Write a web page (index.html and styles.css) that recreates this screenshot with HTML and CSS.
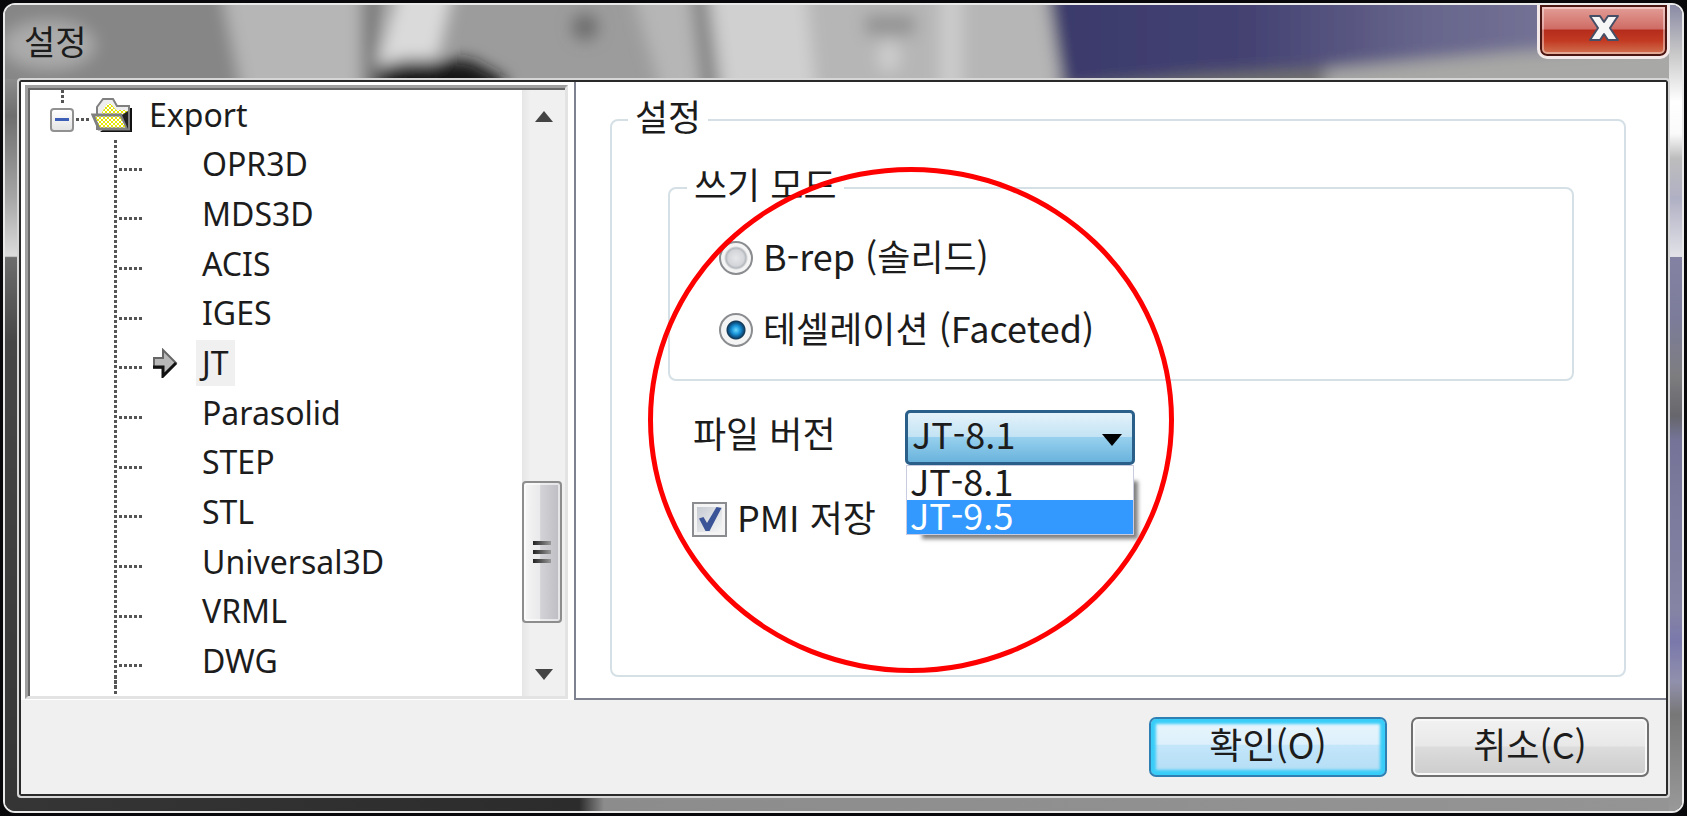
FILE: index.html
```
<!DOCTYPE html>
<html lang="ko">
<head>
    <meta charset="UTF-8">
    <title>설정</title>
    <link rel="stylesheet" href="styles.css">
</head>
<body>
    <div class="window">
        <!-- 반투명 창틀 배경 -->
        <svg class="glass" viewBox="0 0 1677 806" preserveAspectRatio="none" aria-hidden="true">
            <defs>
                <filter id="soft" x="-20%" y="-20%" width="140%" height="140%"><feGaussianBlur stdDeviation="8"/></filter>
                <linearGradient id="sky" x1="0" x2="1">
                    <stop offset="0" stop-color="#3a396b"/>
                    <stop offset="0.3" stop-color="#444272"/>
                    <stop offset="0.55" stop-color="#66648b"/>
                    <stop offset="1" stop-color="#8786a3"/>
                </linearGradient>
                <linearGradient id="left" x1="0" y1="0" x2="0" y2="1">
                    <stop offset="0" stop-color="#8c8c8c"/>
                    <stop offset="0.05" stop-color="#6e6e6e"/>
                    <stop offset="0.16" stop-color="#a5a5a5"/>
                    <stop offset="0.242" stop-color="#dcdcdc"/>
                    <stop offset="0.244" stop-color="#6c6c6c"/>
                    <stop offset="0.36" stop-color="#464646"/>
                    <stop offset="1" stop-color="#353535"/>
                </linearGradient>
                <linearGradient id="right" x1="0" y1="0" x2="0" y2="1">
                    <stop offset="0" stop-color="#8a8aa5"/>
                    <stop offset="0.06" stop-color="#c8c8c8"/>
                    <stop offset="0.12" stop-color="#ffffff"/>
                    <stop offset="0.16" stop-color="#fafafa"/>
                    <stop offset="0.19" stop-color="#bdbdbd"/>
                    <stop offset="0.24" stop-color="#b0b0c4"/>
                    <stop offset="0.312" stop-color="#e2e2e8"/>
                    <stop offset="0.313" stop-color="#8382a3"/>
                    <stop offset="0.39" stop-color="#7c7c9a"/>
                    <stop offset="0.46" stop-color="#7d7d80"/>
                    <stop offset="0.51" stop-color="#66666c"/>
                    <stop offset="0.54" stop-color="#757498"/>
                    <stop offset="0.75" stop-color="#8684a4"/>
                    <stop offset="0.79" stop-color="#7a78ab"/>
                    <stop offset="0.84" stop-color="#9190ac"/>
                    <stop offset="0.88" stop-color="#777777"/>
                    <stop offset="1" stop-color="#999999"/>
                </linearGradient>
                <linearGradient id="bottom" x1="0" x2="1">
                    <stop offset="0" stop-color="#353535"/>
                    <stop offset="0.345" stop-color="#2c2c2c"/>
                    <stop offset="0.36" stop-color="#8c8c8c"/>
                    <stop offset="1" stop-color="#949494"/>
                </linearGradient>
            </defs>
            <rect width="1677" height="806" fill="#9c9c9c"/>
            <g filter="url(#soft)">
                <rect x="-30" y="-30" width="270" height="130" fill="#868686"/>
                <ellipse cx="44" cy="40" rx="46" ry="24" fill="#ababab"/>
                <path d="M215-20H370V100H240z" fill="#b6b6b6"/>
                <rect x="357" y="-20" width="16" height="120" fill="#747474"/>
                <path d="M395-20H450L430 66H370z" fill="#dadada"/>
                <path d="M372 62L400 55H465L500 74V100H372z" fill="#161616"/>
                <circle cx="580" cy="22" r="13" fill="#6c6c6c"/>
                <path d="M625-20H1050L1065 100H660z" fill="#b6b6b6"/>
                <path d="M685-20H700L715 100H698z" fill="#808080"/>
                <path d="M705-20H800L812 100H722z" fill="#d0d0d0"/>
                <path d="M860 10H910V30H860z" fill="#929292"/>
                <ellipse cx="884" cy="52" rx="11" ry="16" fill="#cecece"/>
                <rect x="935" y="-20" width="22" height="120" fill="#cccccc"/>
                <path d="M1040-30H1720V100H1060z" fill="url(#sky)"/>
                <path d="M1060 92L1300 66L1500 48L1700 36V120H1060z" fill="#a8a8a6"/>
                <path d="M1050 84L1200 70L1320 64V110H1050z" fill="#72726e"/>
            </g>
            <rect y="74" width="14" height="732" fill="url(#left)"/>
            <rect x="1664" y="0" width="13" height="806" fill="url(#right)"/>
            <rect y="792" width="1664" height="14" fill="url(#bottom)"/>
        </svg>

        <!-- 제목 표시줄 -->
        <header class="titlebar">
            <h1 class="title">설정</h1>
            <button type="button" class="close-button" aria-label="닫기">
                <svg width="32" height="28" viewBox="0 0 32 28">
                    <path d="M2 2h10l4 6 4-6h10l-8 12 8 12H20l-4-6-4 6H2l8-12z" fill="#f6f6f6" stroke="#474f66" stroke-width="2" stroke-linejoin="round"/>
                </svg>
            </button>
        </header>

        <div class="client">
            <div class="main">
                <!-- 왼쪽 트리 -->
                <nav class="tree-box">
                    <div class="tree">
                        <div class="tree-root">
                            <button type="button" class="expander" aria-label="접기"></button>
                            <span class="root-line"></span>
                            <svg class="folder" width="42" height="36" viewBox="0 0 42 36">
                                <defs>
                                    <pattern id="dither" width="4" height="4" patternUnits="userSpaceOnUse">
                                        <rect width="4" height="4" fill="#ffffff"/>
                                        <rect width="2" height="2" fill="#e6e600"/>
                                        <rect x="2" y="2" width="2" height="2" fill="#e6e600"/>
                                    </pattern>
                                </defs>
                                <path d="M9 35H41V11H38z" fill="#111111"/>
                                <path d="M6 32V10L12 2H22L26 9H38V32z" fill="#eeeeee" stroke="#808080" stroke-width="2"/>
                                <path d="M10 17L16 7H20L25 13H36V17z" fill="url(#dither)"/>
                                <path d="M2 18H30L37 32H8z" fill="url(#dither)" stroke="#808080" stroke-width="3"/>
                                <path d="M31 18L37 14V32z" fill="#222222"/>
                            </svg>
                            <a href="#" class="tree-link root-link">Export</a>
                        </div>
                        <ul class="tree-list">
                            <li><a href="#" class="tree-link">OPR3D</a></li>
                            <li><a href="#" class="tree-link">MDS3D</a></li>
                            <li><a href="#" class="tree-link">ACIS</a></li>
                            <li><a href="#" class="tree-link">IGES</a></li>
                            <li class="current">
                                <svg class="arrow" width="26" height="30" viewBox="0 0 26 30">
                                    <path d="M2 10H11V2L24 15L11 28V20H2z" fill="#b8b8b8" stroke="#666666" stroke-width="2"/>
                                    <path d="M1 19H11V28L24 15" fill="none" stroke="#111111" stroke-width="3"/>
                                </svg>
                                <a href="#" class="tree-link selected">JT</a>
                            </li>
                            <li><a href="#" class="tree-link">Parasolid</a></li>
                            <li><a href="#" class="tree-link">STEP</a></li>
                            <li><a href="#" class="tree-link">STL</a></li>
                            <li><a href="#" class="tree-link">Universal3D</a></li>
                            <li><a href="#" class="tree-link">VRML</a></li>
                            <li><a href="#" class="tree-link">DWG</a></li>
                        </ul>
                    </div>
                    <div class="scrollbar">
                        <button type="button" class="scroll-button" aria-label="위로">
                            <svg width="18" height="11" viewBox="0 0 20 12"><path d="M10 0L20 12H0z" fill="#444444"/></svg>
                        </button>
                        <div class="scroll-thumb"><span></span><span></span><span></span></div>
                        <button type="button" class="scroll-button" aria-label="아래로">
                            <svg width="18" height="11" viewBox="0 0 20 12"><path d="M0 0H20L10 12z" fill="#444444"/></svg>
                        </button>
                    </div>
                </nav>

                <!-- 오른쪽 설정 화면 -->
                <form id="settings" class="pane">
                    <fieldset class="group">
                        <legend>설정</legend>
                        <fieldset class="group mode-group">
                            <legend>쓰기 모드</legend>
                            <label class="option"><input type="radio" name="mode" class="radio"><span>B-rep (솔리드)</span></label>
                            <label class="option"><input type="radio" name="mode" class="radio" checked><span>테셀레이션 (Faceted)</span></label>
                        </fieldset>
                        <div class="version-row">
                            <label for="version">파일 버전</label>
                            <div class="combo">
                                <select id="version" class="combo-select">
                                    <option>JT-8.1</option>
                                    <option>JT-9.5</option>
                                </select>
                                <svg class="combo-arrow" width="20" height="12" viewBox="0 0 20 12"><path d="M0 0H20L10 12z" fill="#000000"/></svg>
                                <ul class="combo-list" role="listbox" aria-label="파일 버전">
                                    <li role="option">JT-8.1</li>
                                    <li role="option" class="active" aria-selected="true">JT-9.5</li>
                                </ul>
                            </div>
                        </div>
                        <label class="option pmi"><input type="checkbox" class="checkbox" checked><span>PMI 저장</span></label>
                    </fieldset>
                    <!-- 강조 표시 원 -->
                    <div class="highlight"></div>
                </form>
            </div>

            <footer class="footer">
                <button type="submit" form="settings" class="button default-button">확인(O)</button>
                <button type="button" class="button">취소(C)</button>
            </footer>
        </div>
    </div>
</body>
</html>
```
FILE: styles.css
```
* {
    box-sizing: border-box;
}

body {
    margin: 0;
    padding: 3px;
    height: 100vh;
    background: #08080a;
    font-family: "Noto Sans CJK KR", sans-serif;
    font-size: 36px;
    line-height: 36px;
    color: #1c1c1c;
}

button, select {
    font: inherit;
    color: inherit;
}

ul {
    margin: 0;
    padding: 0;
    list-style: none;
}

/* 창 */
.window {
    position: relative;
    display: flex;
    flex-direction: column;
    height: 100%;
    padding: 0 12px 13px;
    border: 2px solid #e9e9e9;
    border-radius: 12px;
    overflow: hidden;
}

.glass {
    position: absolute;
    inset: 0;
    width: 100%;
    height: 100%;
}

.titlebar {
    position: relative;
    display: flex;
    justify-content: space-between;
    align-items: flex-start;
    height: 73px;
}

.title {
    margin: 0;
    padding: 18px 7px;
    font-size: 34px;
    font-weight: normal;
}

.close-button {
    display: flex;
    justify-content: center;
    width: 133px;
    padding: 9px 0 14px;
    border: 3px solid #f3e9e9;
    border-top: 0;
    border-radius: 0 0 10px 10px;
    background: linear-gradient(#e5a29c, #cf6d66 46%, #b52c1c 50%, #c23a22 70%, #d47b58);
    box-shadow: inset 0 0 0 2px #4b1511, inset 0 0 0 4px rgba(255, 255, 255, 0.4);
}

/* 내용 영역 */
.client {
    position: relative;
    flex: 1;
    display: flex;
    flex-direction: column;
    border: 2px solid #d6d6d6;
    border-radius: 4px;
    background: #f0f0f0;
    box-shadow: inset 0 0 0 2px #2a2a2a;
    padding: 2px;
}

.main {
    flex: 1;
    display: grid;
    grid-template-columns: minmax(0, 553px) 1fr;
    background: #ffffff;
}

/* 트리 */
.tree-box {
    display: flex;
    margin: 3px 6px 1px 4px;
    border: 3px solid #e3e3e3;
    border-top-color: #a0a0a0;
    border-left-color: #a0a0a0;
    box-shadow: inset 2px 2px 0 #696969;
    padding: 2px 0 0 2px;
    font-family: "Noto Sans", "Noto Sans CJK KR", sans-serif;
    font-size: 32px;
}

.tree {
    flex: 1;
    display: grid;
    grid-template-rows: 1fr 11fr;
    padding-bottom: 10px;
    background:
        repeating-linear-gradient(#555555 0 3px, transparent 3px 5px) 31px 0 / 3px 15px no-repeat,
        repeating-linear-gradient(#555555 0 3px, transparent 3px 5px) 84px 100% / 3px 20px no-repeat;
}

.tree-root {
    display: flex;
    align-items: center;
    padding-left: 20px;
}

.expander {
    width: 24px;
    height: 24px;
    margin-top: 10px;
    padding: 0;
    border: 2px solid #919191;
    border-radius: 4px;
    background: linear-gradient(#3d5fb5, #3d5fb5) center / 14px 3px no-repeat, linear-gradient(#ffffff, #e4e4e4);
}

.root-line {
    width: 15px;
    height: 3px;
    margin: 10px 0 0 2px;
    background: repeating-linear-gradient(90deg, #555555 0 3px, transparent 3px 5px);
}

.tree-link {
    padding: 5px 6px;
    color: #1c1c1c;
    text-decoration: none;
}

.root-link {
    padding-left: 16px;
}

.tree-list {
    display: grid;
    grid-auto-rows: 1fr;
    background: repeating-linear-gradient(#555555 0 3px, transparent 3px 5px) 84px 0 / 3px 100% no-repeat;
}

.tree-list li {
    display: flex;
    align-items: center;
    padding-left: 166px;
    background: repeating-linear-gradient(90deg, #555555 0 3px, transparent 3px 5px) 89px 28px / 25px 3px no-repeat;
}

.tree-list .current {
    gap: 18px;
    padding-left: 122px;
}

.tree-link.selected {
    background: #f0f0f0;
}

/* 스크롤바 */
.scrollbar {
    display: flex;
    flex-direction: column;
    align-items: flex-start;
    width: 43px;
    background: linear-gradient(90deg, #e6e6e6, #f0f0f0 20%, #f0f0f0);
}

.scroll-button {
    display: flex;
    justify-content: center;
    align-items: center;
    width: 100%;
    height: 48px;
    padding: 4px 0 0;
    border: 0;
    background: none;
}

.scroll-thumb {
    display: flex;
    flex-direction: column;
    justify-content: center;
    align-items: center;
    gap: 5px;
    width: 40px;
    height: 142px;
    margin: auto 0 25px;
    border: 2px solid #8d8d8d;
    border-radius: 4px;
    background: linear-gradient(90deg, #f6f6f6, #e9e9eb 45%, #d3d3d7 46%, #bcbcc2);
    box-shadow: inset 0 0 0 2px rgba(255, 255, 255, 0.6);
}

.scroll-thumb span {
    width: 18px;
    height: 4px;
    background: linear-gradient(90deg, #222222, #999999);
}

/* 설정 화면 */
.pane {
    position: relative;
    display: flex;
    padding: 17px 40px 21px 34px;
    border-left: 2px solid #7f8290;
    border-bottom: 2px solid #7f8290;
}

.group {
    min-width: 0;
    margin: 0;
    border: 2px solid #d5e0e6;
    border-radius: 8px;
}

.group legend {
    padding: 0 7px 10px;
    line-height: 32px;
}

.pane > .group {
    flex: 1;
    padding: 26px 50px 20px 56px;
}

.pane > .group > legend {
    margin-left: -40px;
}

.mode-group {
    display: flex;
    flex-direction: column;
    gap: 36px;
    padding: 31px 49px;
}

.mode-group legend {
    margin-left: -32px;
}

.option {
    display: flex;
    align-items: center;
    gap: 10px;
    width: fit-content;
    height: 36px;
}

.option span {
    padding-bottom: 6px;
}

.radio {
    appearance: none;
    width: 34px;
    height: 34px;
    margin: 0;
    border: 2px solid #8a8c8f;
    border-radius: 50%;
    background: radial-gradient(circle, #e6e7e9, #d3d5d9 8px, #b4b8bd 10px, #f4f4f4 12px);
}

.radio:checked {
    background: radial-gradient(circle, #6fd8fb 0, #1d9ade 4px, #0d5c94 7px, #123652 9px, #f4f4f4 10px);
}

.version-row {
    display: flex;
    align-items: center;
    gap: 12px;
    margin: 29px 0 36px 25px;
}

.version-row label {
    width: 200px;
    padding-bottom: 12px;
}

.combo {
    position: relative;
    width: 230px;
}

.combo-select {
    appearance: none;
    display: block;
    width: 100%;
    height: 55px;
    padding: 0 4px 10px;
    border: 3px solid #2a5f8a;
    border-radius: 5px;
    background: linear-gradient(#e4f2fa, #c3e3f4 48%, #97d0ee 50%, #69b3dc);
}

.combo-arrow {
    position: absolute;
    top: 24px;
    right: 13px;
    pointer-events: none;
}

.combo-list {
    position: absolute;
    top: 100%;
    left: 1px;
    right: 1px;
    border: 1px solid #c9cbe0;
    background: #ffffff;
    box-shadow: 10px 10px 4px -6px rgba(0, 0, 0, 0.5);
    line-height: 28px;
}

.combo-list li {
    height: 34px;
    padding-left: 3px;
}

.combo-list .active {
    background: #3399ff;
    color: #ffffff;
}

.pmi {
    margin-left: 24px;
}

.checkbox {
    appearance: none;
    width: 35px;
    height: 35px;
    margin: 0;
    padding: 3px;
    border: 2px solid #8a8c8f;
    background: linear-gradient(135deg, #c5cad2, #f6f6f6) content-box, #f4f4f4;
}

.checkbox:checked::after {
    content: "";
    display: block;
    width: 100%;
    height: 100%;
    background: #3b5397;
    clip-path: polygon(8% 48%, 26% 42%, 40% 66%, 78% 2%, 98% 6%, 50% 98%, 34% 98%);
}

.highlight {
    position: absolute;
    top: 85px;
    left: 72px;
    width: 526px;
    height: 506px;
    border: 5px solid #ff0000;
    border-radius: 50%;
    pointer-events: none;
}

/* 하단 버튼 */
.footer {
    display: flex;
    justify-content: flex-end;
    gap: 24px;
    padding: 17px;
}

.button {
    width: 238px;
    height: 60px;
    padding: 0 0 8px;
    border: 2px solid #707070;
    border-radius: 7px;
    background: linear-gradient(#f2f2f2, #e8e8e8 48%, #dcdcdc 50%, #cdcdcd);
    box-shadow: inset 0 0 0 2px #f8f8f8;
}

.default-button {
    border-color: #2e80b4;
    background: linear-gradient(#eaf6fd, #dcf0fb 45%, #c3e6fa 47%, #b2dcf4);
    box-shadow: inset 0 0 3px 5px #38cdf8;
}
```
